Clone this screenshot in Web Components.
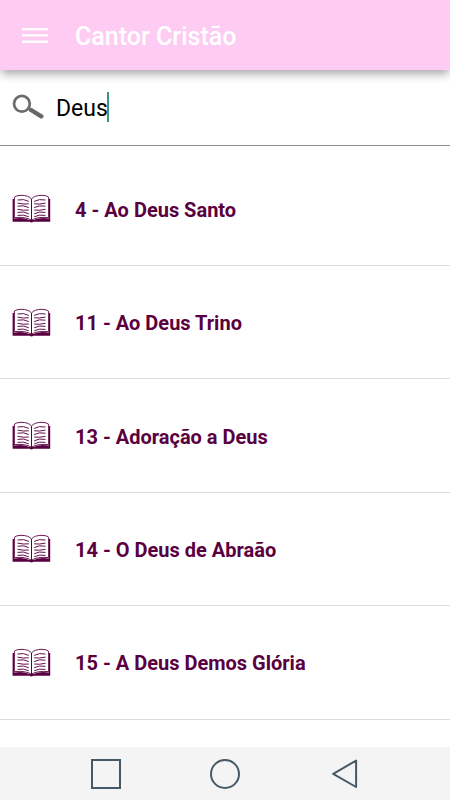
<!DOCTYPE html>
<html lang="pt-BR">
<head>
<meta charset="utf-8">
<title>Cantor Cristão</title>
<style>
    body {
        margin: 0;
        background: #fff;
        font-family: Roboto, sans-serif;
    }
</style>
</head>
<body>
<hymn-app>
    <app-bar slot="header">Cantor Cristão</app-bar>
    <search-field slot="search">Deus</search-field>
    <hymn-item>4 - Ao Deus Santo</hymn-item>
    <hymn-item>11 - Ao Deus Trino</hymn-item>
    <hymn-item>13 - Adoração a Deus</hymn-item>
    <hymn-item>14 - O Deus de Abraão</hymn-item>
    <hymn-item>15 - A Deus Demos Glória</hymn-item>
    <nav-buttons slot="footer"></nav-buttons>
</hymn-app>

<script>
function makeTemplate(html) {
    const template = document.createElement('template');
    template.innerHTML = html;
    return template;
}

const appTemplate = makeTemplate(`
    <style>
        :host {
            display: flex;
            flex-direction: column;
            height: 100vh;
            overflow: hidden;
        }

        .list {
            flex: 1;
            min-height: 0;
            overflow: hidden;
            padding-top: 6.6px;
        }
    </style>
    <slot name="header"></slot>
    <slot name="search"></slot>
    <div class="list"><slot></slot></div>
    <slot name="footer"></slot>
`);

const barTemplate = makeTemplate(`
    <style>
        :host {
            display: flex;
            align-items: center;
            flex: none;
            height: 70px;
            box-sizing: border-box;
            padding: 1px 22px 0;
            background: #fecbf2;
            color: #fff;
            box-shadow: 0 5px 9px -1px rgba(0, 0, 0, 0.34);
            z-index: 1;
        }

        svg {
            flex: none;
            margin-right: 27px;
        }

        .title {
            padding-top: 3px;
            font-size: 25px;
            font-weight: 500;
            line-height: 30px;
        }
    </style>
    <svg width="26" height="18" viewBox="0 0 26 18" fill="#fff">
        <rect x="0" y="1" width="26" height="2.3" rx=".5"/>
        <rect x="0" y="7.3" width="26" height="2.3" rx=".5"/>
        <rect x="0" y="13.6" width="26" height="2.3" rx=".5"/>
    </svg>
    <div class="title"><slot></slot></div>
`);

const searchTemplate = makeTemplate(`
    <style>
        :host {
            display: flex;
            align-items: center;
            flex: none;
            height: 76px;
            box-sizing: border-box;
            padding: 0 12px 1px;
            border-bottom: 1px solid #8c8c8c;
            color: #000;
        }

        svg {
            flex: none;
            margin-right: 12px;
        }

        .value {
            padding-top: 4px;
            font-size: 23px;
            line-height: 30px;
        }

        .caret {
            width: 2px;
            height: 30px;
            margin-left: -1px;
            background: #3d9486;
        }
    </style>
    <svg width="32" height="28" viewBox="0 0 32 28" fill="none">
        <circle cx="9.9" cy="10.8" r="7.9" stroke="#6b6b6b" stroke-width="2.7"/>
        <path d="M16.4 15L20 17.2" stroke="#777" stroke-width="2.6"/>
        <path d="M19 17L29.3 23.4" stroke="#686868" stroke-width="4.4" stroke-linecap="round"/>
    </svg>
    <div class="value"><slot></slot></div>
    <div class="caret"></div>
`);

const itemTemplate = makeTemplate(`
    <style>
        :host {
            display: flex;
            align-items: center;
            height: 113.4px;
            box-sizing: border-box;
            padding: 1px 12px 0;
            border-bottom: 1px solid #dcdcdc;
            color: #5a0040;
        }

        svg {
            flex: none;
            margin-right: 24px;
        }

        .name {
            padding-top: 1px;
            font-size: 20px;
            font-weight: 700;
            line-height: 24px;
        }
    </style>
    <svg width="39" height="30" viewBox="0 0 39 30" fill="none" stroke="#5a0040">
        <!-- cover -->
        <path d="M.6 5H2.2V24.5Q11 23 17.5 26H21.5Q28 23 36.8 24.5V5H38.2V27.8H21.3Q19.5 29.4 17.7 27.8H.6Z" fill="#5a0040" stroke="none"/>
        <!-- pages -->
        <path d="M2.4 3.2Q4 1.5 9 1.3Q16.5 1.3 19.5 5Q22.5 1.3 30 1.3Q35 1.5 36.6 3.2V23.6Q25 22.6 19.5 26.2Q14 22.6 2.4 23.6Z" fill="#fff" stroke-width=".9"/>
        <path d="M19.5 5V26.5" stroke-width="1"/>
        <!-- text lines -->
        <g stroke-width=".95">
            <path d="M5.5 6Q12 4.6 16.8 7.4M5.5 9.1Q12 10.6 16.8 9.8M5.5 12.2Q12 10.8 16.8 13.6M5.5 15.3Q12 16.8 16.8 16M5.5 18.4Q12 17 16.8 19.8M5.5 21.4Q12 20.2 16.8 22.8"/>
            <path d="M33.5 6Q27 4.6 22.2 7.4M33.5 9.1Q27 10.6 22.2 9.8M33.5 12.2Q27 10.8 22.2 13.6M33.5 15.3Q27 16.8 22.2 16M33.5 18.4Q27 17 22.2 19.8M33.5 21.4Q27 20.2 22.2 22.8"/>
        </g>
    </svg>
    <div class="name"><slot></slot></div>
`);

const navTemplate = makeTemplate(`
    <style>
        :host {
            display: flex;
            justify-content: center;
            align-items: center;
            gap: 89px;
            flex: none;
            height: 53px;
            background: #f4f4f4;
        }
    </style>
    <svg width="30" height="30" fill="none" stroke="#465966" stroke-width="2">
        <rect x="1" y="1" width="28" height="28"/>
    </svg>
    <svg width="30" height="30" fill="none" stroke="#465966" stroke-width="2">
        <circle cx="15" cy="15" r="14"/>
    </svg>
    <svg width="30" height="30" fill="none" stroke="#465966" stroke-width="2">
        <path d="M27.1 1.6V28L4.2 14.8Z" stroke-linejoin="round"/>
    </svg>
`);

class BaseElement extends HTMLElement {
    constructor(template) {
        super();
        this.attachShadow({ mode: 'open' });
        this.shadowRoot.appendChild(template.content.cloneNode(true));
    }
}

class HymnApp extends BaseElement {
    constructor() {
        super(appTemplate);
    }
}

class AppBar extends BaseElement {
    constructor() {
        super(barTemplate);
    }
}

class SearchField extends BaseElement {
    constructor() {
        super(searchTemplate);
    }
}

class HymnItem extends BaseElement {
    constructor() {
        super(itemTemplate);
    }
}

class NavButtons extends BaseElement {
    constructor() {
        super(navTemplate);
    }
}

customElements.define('hymn-app', HymnApp);
customElements.define('app-bar', AppBar);
customElements.define('search-field', SearchField);
customElements.define('hymn-item', HymnItem);
customElements.define('nav-buttons', NavButtons);
</script>
</body>
</html>
